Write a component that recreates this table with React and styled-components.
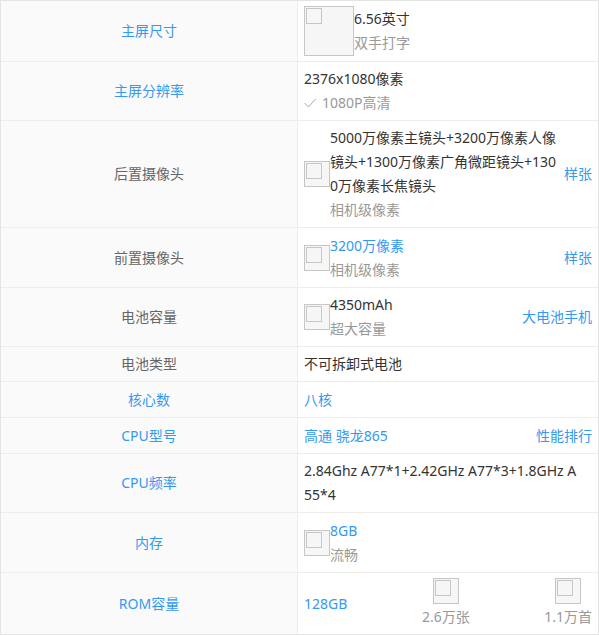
import React from "react";
import styled, { createGlobalStyle } from "styled-components";

const BLUE = "#3399f3";

const GlobalStyle = createGlobalStyle`
  body {
    margin: 0;
    background: #fff;
    font-family: "Noto Sans", "Noto Sans CJK SC", sans-serif;
    font-size: 14px;
  }
`;

const Table = styled.div`
  width: 599px;
  box-sizing: border-box;
  border: 1px solid #e4e4e4;
`;

const Row = styled.div`
  display: grid;
  grid-template-columns: 297px 1fr;
  border-bottom: 1px solid #ededed;
  &:last-child {
    border-bottom: none;
  }
`;

const Label = styled.div`
  box-sizing: border-box;
  background: #fafafa;
  border-right: 1px solid #ededed;
  display: flex;
  align-items: center;
  justify-content: center;
  padding: 5px 0;
  line-height: 24px;
  color: ${(p) => (p.$blue ? BLUE : "#666")};
`;

const Value = styled.div`
  display: flex;
  align-items: center;
  justify-content: ${(p) => (p.$spread ? "space-between" : "flex-start")};
  padding: 5px 6px;
  line-height: 24px;
  color: #333;
  min-width: 0;
`;

const Thumb = styled.span`
  flex: none;
  display: block;
  box-sizing: border-box;
  width: ${(p) => p.$size}px;
  height: ${(p) => p.$size}px;
  padding: 1px;
  border: 1px solid #c6c6c6;
  background: #f6f6f6;
  &::before {
    content: "";
    display: block;
    box-sizing: border-box;
    width: 16px;
    height: 16px;
    border: 1px solid #c6c6c6;
  }
`;

const Info = styled.div`
  flex: 1;
  min-width: 0;
  word-break: break-all;
`;

const Main = styled.div`
  color: ${(p) => (p.$blue ? BLUE : "#333")};
  line-height: ${(p) => (p.$blue ? "25px" : "24px")};
`;

const Sub = styled.div`
  color: #999;
  display: flex;
  align-items: center;
  gap: 6px;
`;

const Link = styled.a`
  flex: none;
  margin-left: 2px;
  color: ${BLUE};
  text-decoration: none;
  cursor: pointer;
`;

const Stat = styled.div`
  display: flex;
  flex-direction: column;
  align-items: center;
  color: #999;
  line-height: 25px;
`;

const Check = () => (
  <svg width="12" height="10" viewBox="0 0 12 10" fill="none">
    <polyline points="0.5,5 4.5,9 11.5,1" stroke="#aaa" strokeWidth="1" />
  </svg>
);

export default function App() {
  return (
    <>
      <GlobalStyle />
      <Table>
        <Row>
          <Label $blue>主屏尺寸</Label>
          <Value>
            <Thumb $size={50} style={{ alignSelf: "flex-start" }} />
            <Info>
              <Main>6.56英寸</Main>
              <Sub>双手打字</Sub>
            </Info>
          </Value>
        </Row>
        <Row>
          <Label $blue>主屏分辨率</Label>
          <Value>
            <Info>
              <Main>2376x1080像素</Main>
              <Sub>
                <Check />
                1080P高清
              </Sub>
            </Info>
          </Value>
        </Row>
        <Row>
          <Label>后置摄像头</Label>
          <Value>
            <Thumb $size={26} />
            <Info>
              <Main>5000万像素主镜头+3200万像素人像镜头+1300万像素广角微距镜头+1300万像素长焦镜头</Main>
              <Sub>相机级像素</Sub>
            </Info>
            <Link>样张</Link>
          </Value>
        </Row>
        <Row>
          <Label>前置摄像头</Label>
          <Value>
            <Thumb $size={26} />
            <Info>
              <Main $blue>3200万像素</Main>
              <Sub>相机级像素</Sub>
            </Info>
            <Link>样张</Link>
          </Value>
        </Row>
        <Row>
          <Label>电池容量</Label>
          <Value>
            <Thumb $size={26} />
            <Info>
              <Main>4350mAh</Main>
              <Sub>超大容量</Sub>
            </Info>
            <Link>大电池手机</Link>
          </Value>
        </Row>
        <Row>
          <Label>电池类型</Label>
          <Value>
            <Info>
              <Main>不可拆卸式电池</Main>
            </Info>
          </Value>
        </Row>
        <Row>
          <Label $blue>核心数</Label>
          <Value>
            <Info>
              <Main $blue>八核</Main>
            </Info>
          </Value>
        </Row>
        <Row>
          <Label $blue>CPU型号</Label>
          <Value>
            <Info>
              <Main $blue>高通 骁龙865</Main>
            </Info>
            <Link>性能排行</Link>
          </Value>
        </Row>
        <Row>
          <Label $blue>CPU频率</Label>
          <Value>
            <Info>
              <Main>
                2.84Ghz A77*1+2.42GHz A77*3+1.8GHz A<br />55*4
              </Main>
            </Info>
          </Value>
        </Row>
        <Row>
          <Label $blue>内存</Label>
          <Value>
            <Thumb $size={26} />
            <Info>
              <Main $blue>8GB</Main>
              <Sub>流畅</Sub>
            </Info>
          </Value>
        </Row>
        <Row>
          <Label $blue>ROM容量</Label>
          <Value $spread>
            <Main $blue>128GB</Main>
            <Stat>
              <Thumb $size={26} />
              2.6万张
            </Stat>
            <Stat>
              <Thumb $size={26} />
              1.1万首
            </Stat>
          </Value>
        </Row>
      </Table>
    </>
  );
}
